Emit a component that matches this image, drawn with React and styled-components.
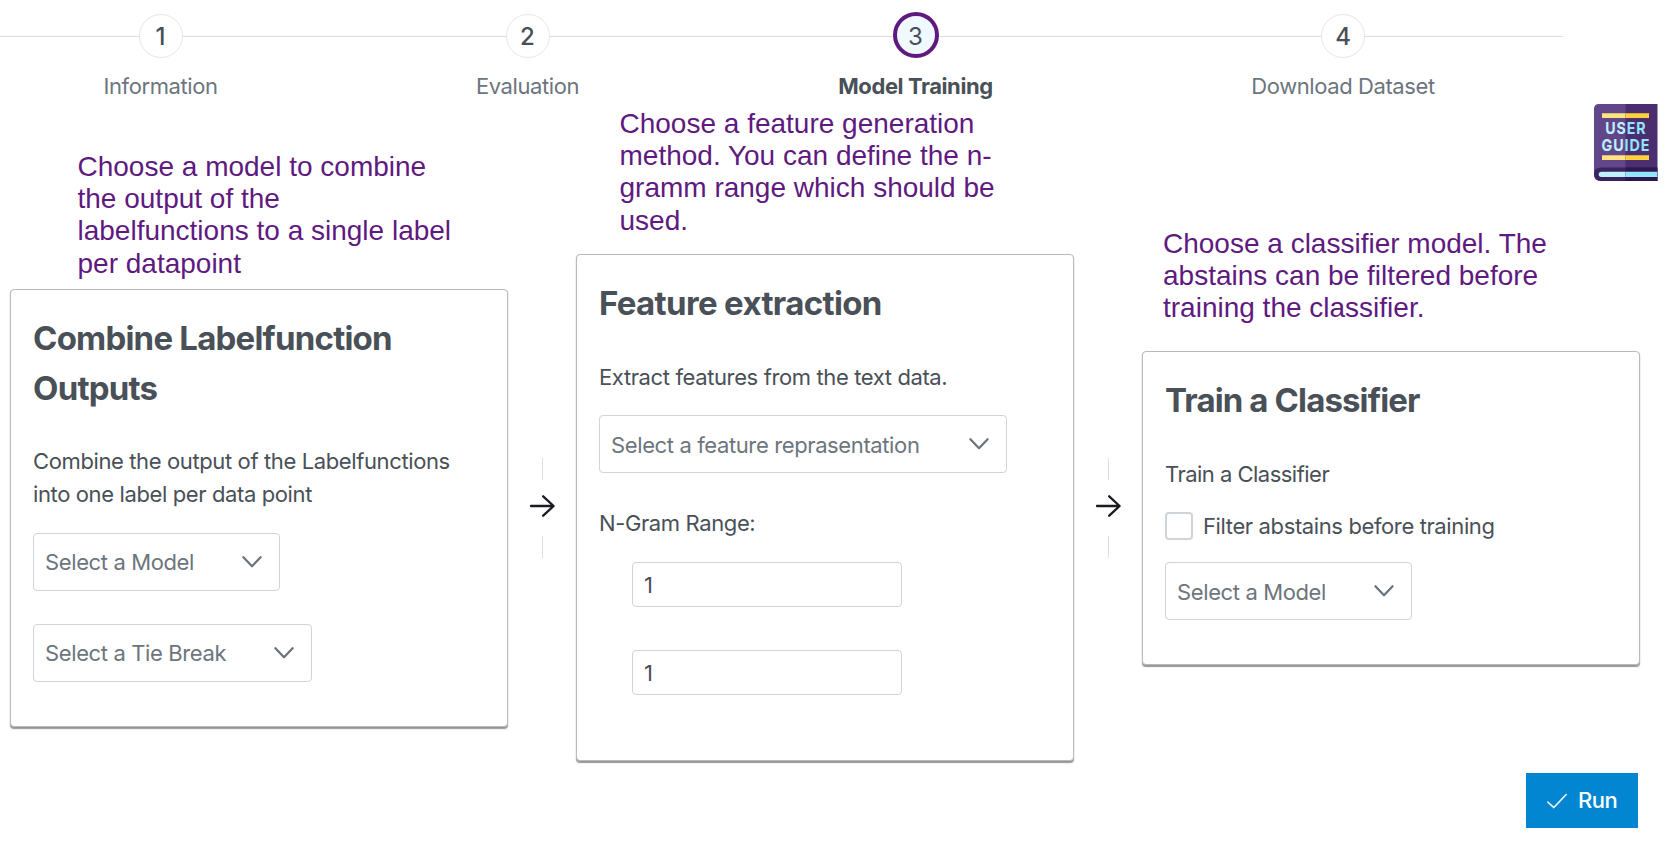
import React from "react";
import styled, { createGlobalStyle } from "styled-components";

const GlobalStyle = createGlobalStyle`
  *, *::before, *::after { box-sizing: border-box; }
  body {
    margin: 0;
    overflow: hidden;
    background: #fff;
    color: #495057;
    font-family: Inter, "Liberation Sans", sans-serif;
    font-size: 22px;
    line-height: 33px;
    letter-spacing: -0.38px;
  }
`;

const Page = styled.div`
  width: 1667px;
  height: 842px;
  display: flex;
  flex-direction: column;
`;

const Steps = styled.nav`
  display: flex;
  flex: none;
  width: 1589px;
  height: 107px;
  margin-left: -26.5px;
`;

const Step = styled.div`
  width: ${(p) => p.$width}px;
  display: flex;
  flex-direction: column;
  align-items: center;
  padding-top: 12px;
  color: ${(p) => (p.$active ? "#495057" : "#6c757d")};
  font-weight: ${(p) => (p.$active ? 700 : 400)};
`;

const Marker = styled.div`
  width: 100%;
  height: 48px;
  display: flex;
  align-items: center;
`;

const Rule = styled.div`
  flex: 1;
  height: 1px;
  background: #dadcdf;
`;

const StepNumber = styled.span`
  width: ${(p) => (p.$active ? 46 : 44)}px;
  height: ${(p) => (p.$active ? 46 : 44)}px;
  margin-bottom: ${(p) => (p.$active ? 2 : 0)}px;
  display: flex;
  align-items: center;
  justify-content: center;
  padding-top: ${(p) => (p.$active ? 2 : 0)}px;
  border: ${(p) => (p.$active ? "4px solid #5f1a80" : "1px solid #e4e7ea")};
  border-radius: 50%;
  background: ${(p) => (p.$active ? "#eff9ff" : "#fff")};
  color: #495057;
  font-size: 24px;
  font-weight: ${(p) => (p.$active ? 400 : 500)};
  letter-spacing: 0;
`;

const StepLabel = styled.span`
  margin-top: 10px;
  white-space: nowrap;
  letter-spacing: -0.41px;
`;

const Flow = styled.main`
  display: flex;
  align-items: flex-start;
  height: 666px;
  padding-left: 10px;
`;

const Column = styled.section`
  width: 498px;
  padding-top: ${(p) => p.$top}px;
`;

const Note = styled.p`
  width: ${(p) => p.$width}px;
  margin: 0 0 ${(p) => p.$gap}px ${(p) => p.$indent}px;
  color: #5f1a80;
  font-family: "Liberation Sans", Arial, sans-serif;
  font-size: 28px;
  line-height: 32.2px;
  letter-spacing: 0;
`;

const Card = styled.article`
  height: ${(p) => p.$height}px;
  padding: 23px 22px 22px;
  border: 1px solid #b9babc;
  border-radius: 4px;
  background: #fff;
  box-shadow: 0 1.5px 1px rgba(0, 0, 0, 0.36), 0 2px 2px rgba(0, 0, 0, 0.08);
`;

const Title = styled.h2`
  margin: 0 0 ${(p) => p.$gap}px;
  font-size: 33px;
  line-height: 50px;
  font-weight: 700;
  letter-spacing: ${(p) => p.$tracking}px;
`;

const Text = styled.p`
  margin: 0 0 ${(p) => p.$gap}px;
  letter-spacing: ${(p) => p.$tracking || -0.38}px;
`;

const Dropdown = styled.div`
  width: ${(p) => p.$width}px;
  height: 58px;
  margin-bottom: ${(p) => p.$gap || 0}px;
  padding: 0 16px 0 11px;
  display: flex;
  align-items: center;
  justify-content: space-between;
  border: 1px solid #ced4da;
  border-radius: 4px;
  color: #6c757d;
`;

const DropdownLabel = styled.span`
  padding-top: 2px;
`;

const RangeFields = styled.div`
  display: flex;
  flex-direction: column;
  gap: 43px;
  padding-left: 33px;
`;

const NumberField = styled.input`
  width: 270px;
  height: 45px;
  padding: 0 11px;
  border: 1px solid #ced4da;
  border-radius: 4px;
  background: #fff;
  color: #495057;
  font: inherit;
`;

const CheckRow = styled.label`
  display: flex;
  align-items: center;
  gap: 10px;
  height: 33px;
  margin-bottom: 19px;
`;

const CheckBox = styled.span`
  width: 28px;
  height: 28px;
  margin-bottom: 1px;
  border: 2px solid #ced4da;
  border-radius: 4px;
`;

const Divider = styled.div`
  width: 68px;
  padding-top: 351px;
  display: flex;
  flex-direction: column;
  align-items: center;
`;

const Dash = styled.span`
  width: 1px;
  height: 22px;
  background: #dcdfe8;
`;

const Footer = styled.footer`
  display: flex;
  justify-content: flex-end;
  padding-right: 29px;
`;

const RunButton = styled.button`
  width: 112px;
  height: 55px;
  padding: 0 0 0 20px;
  display: flex;
  align-items: center;
  gap: 10px;
  border: 0;
  background: #0286d1;
  color: #fff;
  font: inherit;
  font-weight: 500;
  letter-spacing: -0.5px;
`;

const GuideLink = styled.a`
  position: absolute;
  left: 1593.5px;
  top: 104px;
  width: 64px;
  height: 78px;
`;

const Chevron = () => (
  <svg width="22" height="22" viewBox="0 0 22 22" fill="none" stroke="#6c757d" strokeWidth="2.3" strokeLinecap="round" strokeLinejoin="round">
    <path d="M2.4 6.3 L11 15.2 L19.6 6.3" />
  </svg>
);

const Arrow = () => (
  <svg width="28" height="56" viewBox="0 0 28 56" fill="none" stroke="#1b1a20" strokeWidth="2.3" strokeLinecap="round" strokeLinejoin="round">
    <path d="M3 26 H25.4 M15.2 16.3 L25.6 26 L15.2 35.7" />
  </svg>
);

const Check = () => (
  <svg width="22" height="22" viewBox="0 0 22 22" fill="none" stroke="#fff" strokeWidth="1.5" strokeLinecap="round" strokeLinejoin="round">
    <path d="M1.8 12 L7.8 17.6 L20.2 4.6" />
  </svg>
);

const Book = () => (
  <svg width="64" height="78" viewBox="0 0 64 78">
    <defs>
      <linearGradient id="lettering" gradientUnits="userSpaceOnUse" x1="0" y1="0" x2="63" y2="0">
        <stop offset="0.5" stopColor="#bff2ff" />
        <stop offset="0.5" stopColor="#93e5fb" />
      </linearGradient>
    </defs>
    <path d="M5 0 H63.3 V77 H7 Q0 77 0 70 V5 Q0 0 5 0Z" fill="#61478a" />
    <path d="M31.5 0 H63.3 V77 H31.5Z" fill="#4a2e70" />
    <path d="M0 70 Q0 63.5 7 63.5 H63.3 V77 H7 Q0 77 0 70Z" fill="#3b2260" />
    <path d="M31.5 63.5 H63.3 V77 H31.5Z" fill="#2e174f" />
    <path d="M7.3 67.7 H31.5 V73 H7.3 Q4.7 73 4.7 70.3 Q4.7 67.7 7.3 67.7Z" fill="#bff2ff" />
    <path d="M31.5 67.7 H63.3 V73 H31.5Z" fill="#93e5fb" />
    <path d="M8 9.2 H31.5 V14 H8Z M8 51.2 H31.5 V56 H8Z" fill="#ffe282" />
    <path d="M31.5 9.2 H55 V14 H31.5Z M31.5 51.2 H55 V56 H31.5Z" fill="#ffd23b" />
    <g fontFamily="Inter, sans-serif" fontWeight="700" fontSize="16.5" letterSpacing="1" fill="url(#lettering)">
      <text x="11.3" y="30" textLength="41" lengthAdjust="spacingAndGlyphs">USER</text>
      <text x="7.6" y="47.2" textLength="48.6" lengthAdjust="spacingAndGlyphs">GUIDE</text>
    </g>
  </svg>
);

const Select = ({ label, width, gap }) => (
  <Dropdown $width={width} $gap={gap}>
    <DropdownLabel>{label}</DropdownLabel>
    <Chevron />
  </Dropdown>
);

const Connector = () => (
  <Divider>
    <Dash />
    <Arrow />
    <Dash />
  </Divider>
);

const steps = [
  { label: "Information", width: 374 },
  { label: "Evaluation", width: 360 },
  { label: "Model Training", width: 416, active: true },
  { label: "Download Dataset", width: 439 },
];

export default function App() {
  return (
    <Page>
      <GlobalStyle />
      <Steps>
        {steps.map((s, i) => (
          <Step key={s.label} $width={s.width} $active={s.active}>
            <Marker>
              <Rule />
              <StepNumber $active={s.active}>{i + 1}</StepNumber>
              <Rule />
            </Marker>
            <StepLabel>{s.label}</StepLabel>
          </Step>
        ))}
      </Steps>
      <GuideLink aria-label="User guide">
        <Book />
      </GuideLink>
      <Flow>
        <Column $top={44}>
          <Note $width={380} $indent={67.5} $gap={9}>
            Choose a model to combine
            <br />
            the output of the
            <br />
            labelfunctions to a single label
            <br />
            per datapoint
          </Note>
          <Card $height={438}>
            <Title $gap={32} $tracking={-0.78}>
              Combine Labelfunction
              <br />
              Outputs
            </Title>
            <Text $gap={22}>
              Combine the output of the Labelfunctions
              <br />
              into one label per data point
            </Text>
            <Select label="Select a Model" width={247} gap={33} />
            <Select label="Select a Tie Break" width={279} />
          </Card>
        </Column>
        <Connector />
        <Column $top={1}>
          <Note $width={385} $indent={43.5} $gap={17}>
            Choose a feature generation method. You can define the n-gramm range which should be used.
          </Note>
          <Card $height={507}>
            <Title $gap={33.5} $tracking={-0.65}>Feature extraction</Title>
            <Text $gap={21}>Extract features from the text data.</Text>
            <Select label="Select a feature reprasentation" width={408} gap={34} />
            <Text $gap={22}>N-Gram Range:</Text>
            <RangeFields>
              <NumberField defaultValue="1" />
              <NumberField defaultValue="1" />
            </RangeFields>
          </Card>
        </Column>
        <Connector />
        <Column $top={121}>
          <Note $width={400} $indent={21} $gap={26}>
            Choose a classifier model. The abstains can be filtered before training the classifier.
          </Note>
          <Card $height={314}>
            <Title $gap={33.5} $tracking={-0.88}>Train a Classifier</Title>
            <Text $gap={19} $tracking={-0.52}>Train a Classifier</Text>
            <CheckRow>
              <CheckBox />
              Filter abstains before training
            </CheckRow>
            <Select label="Select a Model" width={247} />
          </Card>
        </Column>
      </Flow>
      <Footer>
        <RunButton>
          <Check />
          Run
        </RunButton>
      </Footer>
    </Page>
  );
}
